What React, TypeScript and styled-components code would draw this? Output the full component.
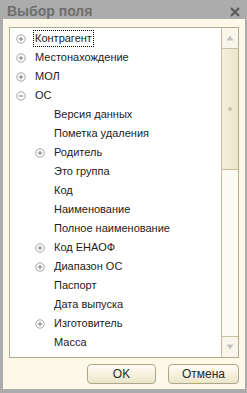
import styled, { createGlobalStyle } from "styled-components";

const GlobalStyle = createGlobalStyle`
  html, body {
    margin: 0;
    padding: 0;
    background: #acacac;
  }
  body {
    font-family: "Liberation Sans", Arial, sans-serif;
  }
`;

type Node = {
  label: string;
  level: number;
  expander?: "plus" | "minus";
  focused?: boolean;
};

const nodes: Node[] = [
  { label: "Контрагент", level: 0, expander: "plus", focused: true },
  { label: "Местонахождение", level: 0, expander: "plus" },
  { label: "МОЛ", level: 0, expander: "plus" },
  { label: "ОС", level: 0, expander: "minus" },
  { label: "Версия данных", level: 1 },
  { label: "Пометка удаления", level: 1 },
  { label: "Родитель", level: 1, expander: "plus" },
  { label: "Это группа", level: 1 },
  { label: "Код", level: 1 },
  { label: "Наименование", level: 1 },
  { label: "Полное наименование", level: 1 },
  { label: "Код ЕНАОФ", level: 1, expander: "plus" },
  { label: "Диапазон ОС", level: 1, expander: "plus" },
  { label: "Паспорт", level: 1 },
  { label: "Дата выпуска", level: 1 },
  { label: "Изготовитель", level: 1, expander: "plus" },
  { label: "Масса", level: 1 },
  { label: "Первоначальная стоимость", level: 1 },
];

const Expander = ({ kind }: { kind?: "plus" | "minus" }) => (
  <ExpanderBox>
    {kind && (
      <svg width="10" height="10" viewBox="0 0 10 10">
        <circle cx="5" cy="5" r="4.2" fill="#fff" stroke="#a3a3a3" strokeWidth="1" />
        <line x1="2.8" y1="5" x2="7.2" y2="5" stroke="#7a7a7a" strokeWidth="1" />
        {kind === "plus" && (
          <line x1="5" y1="2.8" x2="5" y2="7.2" stroke="#7a7a7a" strokeWidth="1" />
        )}
      </svg>
    )}
  </ExpanderBox>
);

const Triangle = ({ up }: { up?: boolean }) => (
  <svg width="8" height="6" viewBox="0 0 8 6">
    <polygon points={up ? "4,0.5 7.5,5.5 0.5,5.5" : "0.5,0.5 7.5,0.5 4,5.5"} fill="#c3c3c3" />
  </svg>
);

export default function App() {
  return (
    <>
      <GlobalStyle />
      <Window>
        <TitleBar>
          <Title>Выбор поля</Title>
          <CloseButton>
            <svg width="10" height="10" viewBox="0 0 10 10">
              <path d="M1 1 L9 9 M9 1 L1 9" stroke="#5c5c5c" strokeWidth="2.3" />
            </svg>
          </CloseButton>
        </TitleBar>
        <Panel>
          <TreeList>
            <TreeArea>
              {nodes.map((n) => (
                <Row key={n.label} $level={n.level}>
                  <Expander kind={n.expander} />
                  <Label $focused={n.focused}>{n.label}</Label>
                </Row>
              ))}
            </TreeArea>
            <ScrollBar>
              <ScrollButton>
                <Triangle up />
              </ScrollButton>
              <Thumb>
                <Grip />
              </Thumb>
              <Track />
              <ScrollButton $bottom>
                <Triangle />
              </ScrollButton>
            </ScrollBar>
          </TreeList>
          <ButtonBar>
            <Button $width={69}>OK</Button>
            <Button $width={71}>Отмена</Button>
          </ButtonBar>
        </Panel>
      </Window>
    </>
  );
}

const Window = styled.div`
  width: 247px;
  height: 393px;
  background: #acacac;
  display: flex;
  flex-direction: column;
  overflow: hidden;
`;

const TitleBar = styled.div`
  height: 19px;
  display: flex;
  align-items: center;
  justify-content: space-between;
  padding: 0 7px 0 7px;
`;

const Title = styled.span`
  font-size: 14px;
  font-weight: bold;
  color: #6e6e6e;
  padding-top: 3px;
`;

const CloseButton = styled.span`
  display: flex;
  padding-top: 4px;
`;

const Panel = styled.div`
  flex: 1;
  margin: 0 2px 4px 3px;
  background: #fcf9e8;
  padding: 8px 6px 5px 6px;
  display: flex;
  flex-direction: column;
`;

const TreeList = styled.div`
  height: 331px;
  box-sizing: border-box;
  border: 1px solid #b0ab8d;
  background: #fff;
  display: flex;
  overflow: hidden;
`;

const TreeArea = styled.div`
  flex: 1;
  padding-top: 1px;
  overflow: hidden;
`;

const Row = styled.div<{ $level: number }>`
  height: 19px;
  display: flex;
  align-items: center;
  padding-left: ${(p) => 6 + p.$level * 19}px;
  white-space: nowrap;
`;

const ExpanderBox = styled.span`
  width: 10px;
  height: 10px;
  display: flex;
  margin-right: 7px;
  flex-shrink: 0;
`;

const Label = styled.span<{ $focused?: boolean }>`
  font-size: 11px;
  color: #1c1c1c;
  line-height: 15px;
  padding: 0 1px;
  border: 1px dotted ${(p) => (p.$focused ? "#000" : "transparent")};
`;

const ScrollBar = styled.div`
  width: 16px;
  border-left: 1px solid #c2bea0;
  background: #fbfaf3;
  display: flex;
  flex-direction: column;
`;

const ScrollButton = styled.div<{ $bottom?: boolean }>`
  height: 20px;
  display: flex;
  align-items: center;
  justify-content: center;
  background: #f8f6ea;
  border-${(p) => (p.$bottom ? "top" : "bottom")}: 1px solid #c6c2a4;
`;

const Thumb = styled.div`
  height: 120px;
  background: linear-gradient(to right, #f3f0dc, #ebe6c8);
  border-bottom: 1px solid #c2bd9c;
  display: flex;
  align-items: center;
  justify-content: center;
`;

const Grip = styled.span`
  width: 4px;
  height: 4px;
  border-radius: 50%;
  background: #c9c5b2;
`;

const Track = styled.div`
  flex: 1;
`;

const ButtonBar = styled.div`
  margin-top: 6px;
  display: flex;
  justify-content: flex-end;
  gap: 12px;
`;

const Button = styled.div<{ $width: number }>`
  width: ${(p) => p.$width}px;
  height: 20px;
  box-sizing: border-box;
  border: 1px solid #aca78b;
  border-radius: 4px;
  background: linear-gradient(#fefdf6, #f3efda 60%, #ebe5c9);
  display: flex;
  align-items: center;
  justify-content: center;
  font-size: 12px;
  color: #2a2a2a;
`;
